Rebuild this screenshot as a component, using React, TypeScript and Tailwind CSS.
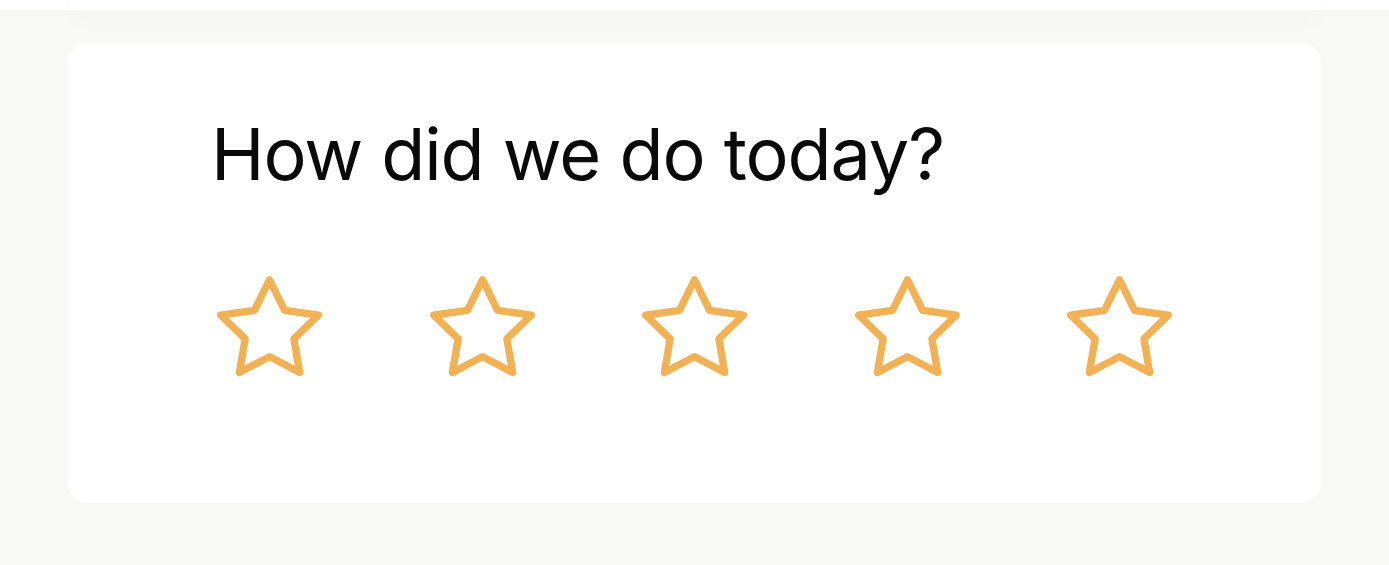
import React, { useState } from 'react';

const Star: React.FC<{ filled: boolean; onClick: () => void }> = ({ filled, onClick }) => (
  <button type="button" onClick={onClick} className="block shrink-0" aria-label="rate">
    <svg
      viewBox="0 0 24 24"
      className="w-[117px] h-[117px]"
      fill={filled ? '#f2b155' : 'none'}
      stroke="#f2b155"
      strokeWidth={1.5}
      strokeLinejoin="round"
      strokeLinecap="round"
    >
      <polygon points="12 2 15.09 8.26 22 9.27 17 14.14 18.18 21.02 12 17.77 5.82 21.02 7 14.14 2 9.27 8.91 8.26" />
    </svg>
  </button>
);

export default function App() {
  const [rating, setRating] = useState(0);

  return (
    <div className="min-h-[565px] bg-[#f8f8f7] font-['Inter',sans-serif]">
      <div className="h-[10px] bg-white">
        <div className="mx-[70px] h-[10px] bg-white shadow-[0_8px_24px_rgba(0,0,0,0.035)]" />
      </div>
      <div className="px-[68px] pt-[33px]">
        <div className="bg-white rounded-[20px] pl-[143px] pt-[75px] pb-[116px]">
          <h1 className="text-[72px] leading-none text-[#0a0a0a] font-normal tracking-[-0.015em]">
            How did we do today?
          </h1>
          <div className="flex gap-[95.5px] mt-[80px]">
            {[1, 2, 3, 4, 5].map((n) => (
              <Star key={n} filled={n <= rating} onClick={() => setRating(n)} />
            ))}
          </div>
        </div>
      </div>
    </div>
  );
}
